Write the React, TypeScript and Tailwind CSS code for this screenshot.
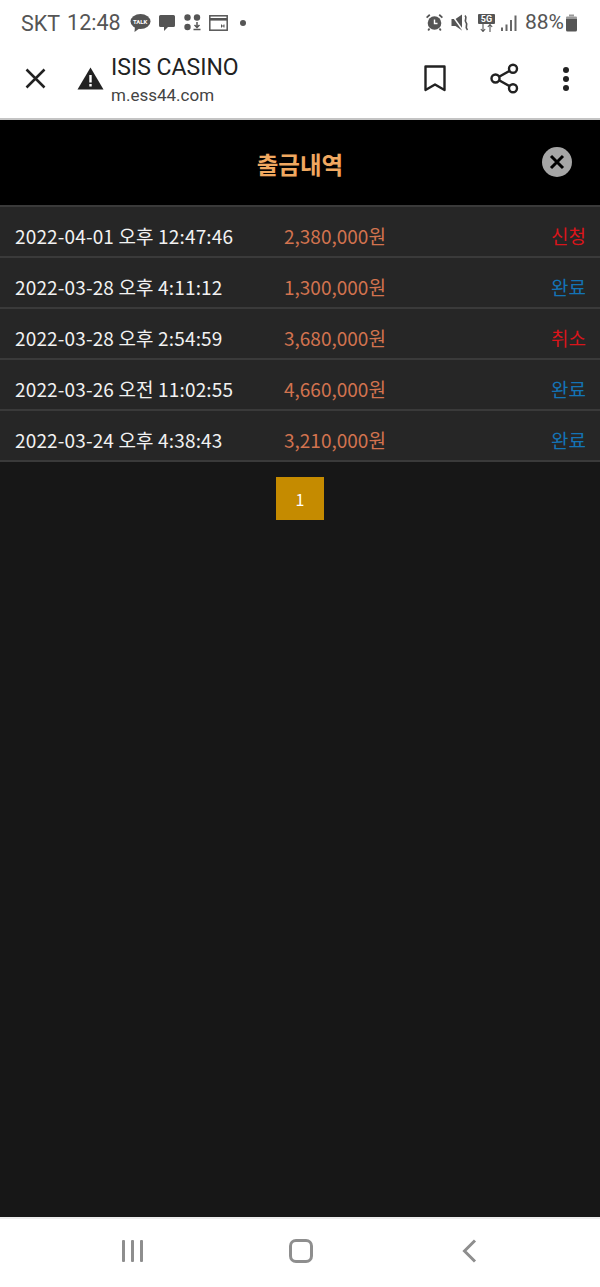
import React from "react";

const rows = [
  { date: "2022-04-01 오후 12:47:46", amount: "2,380,000원", status: "신청" },
  { date: "2022-03-28 오후 4:11:12", amount: "1,300,000원", status: "완료" },
  { date: "2022-03-28 오후 2:54:59", amount: "3,680,000원", status: "취소" },
  { date: "2022-03-26 오전 11:02:55", amount: "4,660,000원", status: "완료" },
  { date: "2022-03-24 오후 4:38:43", amount: "3,210,000원", status: "완료" },
];

function TalkIcon() {
  return (
    <div className="relative h-[20px] w-[21px]">
      <svg width="21" height="20" viewBox="0 0 21 20">
        <ellipse cx="10.5" cy="8.5" rx="10" ry="7.5" fill="#555" />
        <path d="M5 13 L4.5 19 L10 15 Z" fill="#555" />
      </svg>
      <span className="absolute left-0 top-[5px] w-[21px] text-center text-[6px] leading-[7px] font-bold text-white">TALK</span>
    </div>
  );
}

function NotifyIcons() {
  return (
    <div className="flex items-center">
      <TalkIcon />
      <svg className="ml-[7px]" width="18" height="18" viewBox="0 0 18 18">
        <path d="M2.5 1 H15.5 A1.5 1.5 0 0 1 17 2.5 V11.5 A1.5 1.5 0 0 1 15.5 13 H10 L6 17 V13 H2.5 A1.5 1.5 0 0 1 1 11.5 V2.5 A1.5 1.5 0 0 1 2.5 1 Z" fill="#555" />
      </svg>
      <svg className="ml-[8px]" width="17" height="17" viewBox="0 0 17 17">
        <circle cx="3.5" cy="3.5" r="3.2" fill="#555" />
        <circle cx="13" cy="3.5" r="3.2" fill="#555" />
        <circle cx="3.5" cy="13" r="3.2" fill="#555" />
        <path d="M13 8 V13 M10.5 11 L13 13.5 L15.5 11 M9.5 15.5 H16.5" stroke="#555" strokeWidth="1.5" fill="none" />
      </svg>
      <svg className="ml-[8px]" width="19" height="16" viewBox="0 0 19 16">
        <rect x="0.8" y="0.8" width="17.4" height="14.4" fill="none" stroke="#555" strokeWidth="1.5" />
        <rect x="1" y="3" width="17" height="2.6" fill="#555" />
        <path d="M12.5 9.5 V12.5 M15 9.5 V12.5 M12.5 11 H15" stroke="#555" strokeWidth="1" />
      </svg>
      <div className="ml-[12px] h-[6px] w-[6px] rounded-full bg-[#555]" />
    </div>
  );
}

function StatusIcons() {
  return (
    <div className="flex items-center">
      <svg width="17" height="17" viewBox="0 0 17 17">
        <circle cx="8.5" cy="9" r="6.8" fill="#555" />
        <path d="M8.5 5.5 V9.5 H11.5" stroke="#fff" strokeWidth="1.4" fill="none" />
        <path d="M0.6 3.6 L3.8 0.8 M16.4 3.6 L13.2 0.8 M3.5 14.5 L2.2 16.5 M13.5 14.5 L14.8 16.5" stroke="#555" strokeWidth="1.8" />
      </svg>
      <svg className="ml-[8px]" width="18" height="17" viewBox="0 0 18 17">
        <path d="M0.5 5 H4.5 L11 0.5 V16.5 L4.5 12 H0.5 Z" fill="#555" />
        <path d="M0.5 0.5 L12 16.5" stroke="#fff" strokeWidth="1.4" />
        <path d="M14 1.5 C17 4.5 12.5 6 15 8.5 C17.5 11 13 12.5 16.5 16" stroke="#555" strokeWidth="1.7" fill="none" />
      </svg>
      <div className="relative ml-[9px] h-[18px] w-[17px]">
        <div className="h-[10px] w-[17px] rounded-[1px] bg-[#555] text-center text-[9px] leading-[10px] font-bold text-white">5G</div>
        <svg className="absolute left-0 top-[10px]" width="17" height="8" viewBox="0 0 17 8">
          <path d="M5 0 V7 M2.8 5 L5 7.5 L7.2 5 M12 8 V1 M9.8 3 L12 0.5 L14.2 3" stroke="#555" strokeWidth="1.1" fill="none" />
        </svg>
      </div>
      <svg className="ml-[6px]" width="16" height="16" viewBox="0 0 16 16">
        <rect x="0" y="12.5" width="2" height="3.5" fill="#666" />
        <rect x="4.5" y="9.5" width="2" height="6.5" fill="#666" />
        <rect x="9" y="5" width="2" height="11" fill="#666" />
        <rect x="13.5" y="0.5" width="2" height="15.5" fill="#666" />
      </svg>
      <span className="ml-[8px] text-[21px] leading-[23px] text-[#555]">88%</span>
      <svg className="ml-[1px]" width="13" height="18" viewBox="0 0 13 18">
        <path d="M4 0.5 H9 V2.5 H4 Z" fill="#999" />
        <rect x="1" y="2.5" width="11" height="3" rx="1" fill="#999" />
        <path d="M1 5 H12 V16 A1.5 1.5 0 0 1 10.5 17.5 H2.5 A1.5 1.5 0 0 1 1 16 Z" fill="#555" />
      </svg>
    </div>
  );
}

function BrowserBar() {
  return (
    <div className="flex h-[75px] items-center border-b-2 border-[#c4c4c4] bg-white pb-[6px]">
      <svg className="ml-[25px]" width="21" height="21" viewBox="0 0 21 21">
        <path d="M1.5 1.5 L19.5 19.5 M19.5 1.5 L1.5 19.5" stroke="#222" strokeWidth="2.5" />
      </svg>
      <svg className="ml-[31px]" width="27" height="23" viewBox="0 0 27 23">
        <path d="M13.5 0.5 L26.5 22.5 H0.5 Z" fill="#222" />
        <rect x="12.3" y="8" width="2.4" height="7.5" fill="#fff" />
        <rect x="12.3" y="17" width="2.4" height="2.5" fill="#fff" />
      </svg>
      <div className="ml-[7px] mt-[2px] flex flex-col">
        <span className="text-[23px] leading-[26px] text-[#222]">ISIS CASINO</span>
        <span className="mt-[4px] text-[17px] leading-[20px] text-[#444]">m.ess44.com</span>
      </div>
      <svg className="ml-auto" width="22" height="27" viewBox="0 0 22 27">
        <path d="M1.5 1.5 H20.5 V25 L11 19.5 L1.5 25 Z" fill="none" stroke="#222" strokeWidth="2.4" strokeLinejoin="round" />
      </svg>
      <svg className="ml-[44px]" width="29" height="31" viewBox="0 0 29 31">
        <path d="M23 6 L6 15.5 L23 25" fill="none" stroke="#222" strokeWidth="2.4" />
        <circle cx="23" cy="5.8" r="4" fill="#fff" stroke="#222" strokeWidth="2.4" />
        <circle cx="5.5" cy="15.5" r="4" fill="#fff" stroke="#222" strokeWidth="2.4" />
        <circle cx="23" cy="25.2" r="4" fill="#fff" stroke="#222" strokeWidth="2.4" />
      </svg>
      <div className="ml-[44px] mr-[31px] flex flex-col gap-[3px]">
        <div className="h-[6px] w-[6px] rounded-full bg-[#222]" />
        <div className="h-[6px] w-[6px] rounded-full bg-[#222]" />
        <div className="h-[6px] w-[6px] rounded-full bg-[#222]" />
      </div>
    </div>
  );
}

function WithdrawRow({ date, amount, status }: { date: string; amount: string; status: string }) {
  const statusColor = status === "완료" ? "text-[#1473b5]" : "text-[#d9151b]";
  return (
    <div className="flex h-[51px] items-center border-b-2 border-[#3a3a3a] bg-[#262626] pl-[15px] pr-[14px] pt-[10px] text-[19px]">
      <span className="w-[269px] tracking-[0.15px] text-[#f2f2f2]">{date}</span>
      <span className="text-[#d2734f]">{amount}</span>
      <span className={`ml-auto ${statusColor}`}>{status}</span>
    </div>
  );
}

export default function App() {
  return (
    <div className="flex h-[1287px] w-[600px] flex-col overflow-hidden bg-white font-['Noto_Sans_CJK_KR','Noto_Sans',sans-serif]">
      <div className="flex h-[45px] items-center justify-between bg-white pl-[21px] pr-[22px] font-['Roboto',sans-serif]">
        <div className="flex items-center">
          <span className="mt-[2px] text-[21.5px] leading-[25px] text-[#555]">SKT</span>
          <span className="ml-[7px] text-[21.5px] leading-[25px] text-[#555]">12:48</span>
          <div className="ml-[9px]">
            <NotifyIcons />
          </div>
        </div>
        <StatusIcons />
      </div>
      <div className="font-['Roboto',sans-serif]">
        <BrowserBar />
      </div>

      <div className="flex flex-1 flex-col bg-[#171717]">
        <div className="relative flex h-[85px] items-center justify-center bg-black pt-[4px]">
          <span className="text-[23.5px] font-bold text-[#f0a860]">출금내역</span>
          <div className="absolute right-[28px] top-[27px] flex h-[30px] w-[30px] items-center justify-center rounded-full bg-[#a6a6a6]">
            <svg width="16" height="16" viewBox="0 0 16 16">
              <path d="M2 2 L14 14 M14 2 L2 14" stroke="#000" strokeWidth="3" />
            </svg>
          </div>
        </div>
        <div className="border-t-2 border-[#3a3a3a]">
          {rows.map((row) => (
            <WithdrawRow key={row.date} {...row} />
          ))}
        </div>
        <div className="mt-[15px] flex justify-center">
          <div className="flex h-[43px] w-[48px] items-center justify-center bg-[#c58b00] text-[16px] text-white">1</div>
        </div>
      </div>

      <div className="flex h-[70px] items-center border-t-2 border-[#ededed] bg-white pb-[5px]">
        <div className="ml-[122px] flex gap-[6px]">
          <div className="h-[22px] w-[3px] rounded-[1px] bg-[#8e8e8e]" />
          <div className="h-[22px] w-[3px] rounded-[1px] bg-[#8e8e8e]" />
          <div className="h-[22px] w-[3px] rounded-[1px] bg-[#8e8e8e]" />
        </div>
        <div className="ml-[146px] h-[24px] w-[24px] rounded-[7px] border-[3px] border-[#8e8e8e]" />
        <svg className="ml-[149px]" width="15" height="24" viewBox="0 0 15 24">
          <path d="M13 1.5 L2.5 12 L13 22.5" fill="none" stroke="#8e8e8e" strokeWidth="3" />
        </svg>
      </div>
    </div>
  );
}
